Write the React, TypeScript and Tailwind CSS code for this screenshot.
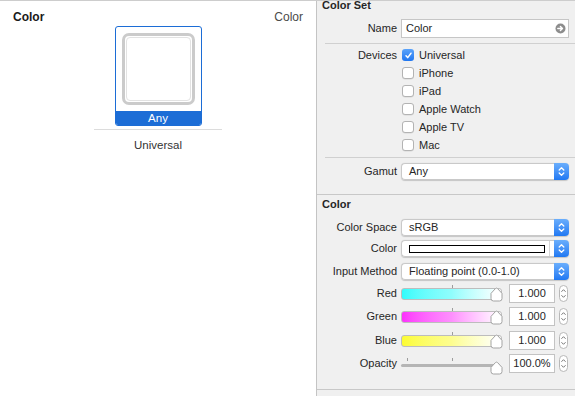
import React from "react";

function BlueStepper() {
  return (
    <div className="w-[15px] h-full shrink-0 rounded-r-[4px] bg-gradient-to-b from-[#6aaefc] to-[#1f78f2] flex items-center justify-center">
      <svg width="7" height="11" viewBox="0 0 7 11" fill="none" stroke="white" strokeWidth="1.3" strokeLinecap="round" strokeLinejoin="round">
        <path d="M1.2 4 L3.5 1.7 L5.8 4" />
        <path d="M1.2 7 L3.5 9.3 L5.8 7" />
      </svg>
    </div>
  );
}

function Popup({ children }: { children?: React.ReactNode }) {
  return (
    <div className="flex-1 h-[17px] flex rounded-[4px] shadow-[0_0.5px_1px_rgba(0,0,0,0.18)]">
      <div className="flex-1 flex items-center bg-white border-y border-l border-[#c9c9c9] rounded-l-[4px] pl-[7px] leading-[13px]">
        {children}
      </div>
      <BlueStepper />
    </div>
  );
}

function Check({ checked, label }: { checked?: boolean; label: string }) {
  return (
    <div className="h-[18px] flex items-center">
      {checked ? (
        <div className="w-[12px] h-[12px] rounded-[3px] bg-gradient-to-b from-[#5aa3fa] to-[#1f76f0] flex items-center justify-center">
          <svg width="9" height="9" viewBox="0 0 9 9" fill="none" stroke="white" strokeWidth="1.5" strokeLinecap="round" strokeLinejoin="round">
            <path d="M2 4.8 L3.7 6.6 L7 2.2" />
          </svg>
        </div>
      ) : (
        <div className="w-[12px] h-[12px] rounded-[3px] bg-white border border-[#b3b3b3] shadow-[0_0.5px_0.5px_rgba(0,0,0,0.1)]" />
      )}
      <span className="ml-[5px] leading-[13px]">{label}</span>
    </div>
  );
}

function Row({ label, children, className = "" }: { label: string; children?: React.ReactNode; className?: string }) {
  return (
    <div className={"flex items-center " + className}>
      <div className="w-[80px] shrink-0 text-right leading-[13px]">{label}</div>
      <div className="ml-[4px] flex-1 flex items-center">{children}</div>
    </div>
  );
}

function Thumb() {
  return (
    <svg className="absolute right-[-1px] top-[-1px]" width="13" height="15" viewBox="0 0 13 15">
      <path d="M1 6.4 L5.4 1.6 Q6.5 0.6 7.6 1.6 L12 6.4 V11.5 Q12 14 9.5 14 H3.5 Q1 14 1 11.5 Z" fill="white" stroke="#a3a3a3" strokeWidth="1" />
    </svg>
  );
}

function SmallStepper() {
  return (
    <div className="w-[9px] h-[17px] rounded-[5px] bg-white border border-[#b8b8b8] flex flex-col items-center justify-center">
      <svg width="7" height="13" viewBox="0 0 7 13" fill="none" stroke="#666" strokeWidth="0.9" strokeLinecap="round" strokeLinejoin="round">
        <path d="M1.7 4.5 L3.5 2.7 L5.3 4.5" />
        <path d="M1.7 8.5 L3.5 10.3 L5.3 8.5" />
      </svg>
    </div>
  );
}

function ValueBox({ value }: { value: string }) {
  return (
    <>
      <div className="ml-[7px] w-[46px] h-[19px] bg-white border border-[#c3c3c3] flex items-center justify-center leading-[13px]">
        {value}
      </div>
      <div className="ml-[4px]">
        <SmallStepper />
      </div>
    </>
  );
}

function GradientSlider({ trackClass }: { trackClass: string }) {
  return (
    <div className="relative w-[101px] h-[12px]">
      <div className="absolute left-[51px] top-[-3px] w-px h-[3px] bg-[#9c9c9c]" />
      <div className={"w-full h-full rounded-[3px] border border-[#bdbdbd] " + trackClass} />
      <Thumb />
    </div>
  );
}

function OpacitySlider() {
  return (
    <div className="relative w-[101px] h-[12px]">
      <div className="absolute left-[6px] top-[0px] w-px h-[3px] bg-[#9c9c9c]" />
      <div className="absolute left-[51px] top-[0px] w-px h-[3px] bg-[#9c9c9c]" />
      <div className="absolute left-0 right-[4px] top-[6px] h-[3px] rounded-full bg-[#b5b5b5]" />
      <svg className="absolute right-[-1px] top-[3px]" width="13" height="14" viewBox="0 0 13 14">
        <path d="M1 6.4 L5.4 1.6 Q6.5 0.6 7.6 1.6 L12 6.4 V10.5 Q12 13 9.5 13 H3.5 Q1 13 1 10.5 Z" fill="white" stroke="#a3a3a3" strokeWidth="1" />
      </svg>
    </div>
  );
}

export default function App() {
  return (
    <div className="w-[575px] h-[396px] flex overflow-hidden border-t border-[#cdcdcd] font-['Liberation_Sans',Arial,sans-serif] text-[11px] text-[#262626]">
      {/* Left panel */}
      <div className="w-[317px] shrink-0 bg-white border-r border-[#c4c4c4] flex flex-col items-center pt-[9px]">
        <div className="w-full h-[14px] flex justify-between px-[13px] leading-[14px] text-[12px]">
          <span className="font-bold text-[#1a1a1a]">Color</span>
          <span className="text-[#4a4a4a]">Color</span>
        </div>
        <div className="mt-[2px] w-[87px] h-[100px] border border-[#1c6dd6] rounded-[3px] flex flex-col items-center overflow-hidden">
          <div className="mt-[6px] w-[73px] h-[72px] rounded-[7px] border-[3px] border-[#cbcbcb] bg-white p-[1px]">
            <div className="w-full h-full rounded-[4px] border border-[#e2e2e2]" />
          </div>
          <div className="mt-auto w-full h-[14px] bg-[#1c6dd6] text-white text-[11.5px] leading-[14px] text-center">Any</div>
        </div>
        <div className="mt-[3px] w-[128px] h-px bg-[#dcdcdc]" />
        <div className="mt-[8px] text-[11.5px] leading-[14px] text-[#333]">Universal</div>
      </div>

      {/* Right panel */}
      <div className="flex-1 bg-[#f0f0f0] flex flex-col">
        <div className="-mt-[2px] h-[13px] leading-[13px] pl-[5px] font-bold">Color Set</div>

        <Row label="Name" className="mt-[7px] h-[19px] pr-[6px]">
          <div className="flex-1 h-[19px] bg-white border border-[#c6c6c6] flex items-center pl-[4px] pr-[2px]">
            <span className="flex-1 leading-[13px]">Color</span>
            <svg width="11" height="11" viewBox="0 0 11 11">
              <circle cx="5.5" cy="5.5" r="5" fill="#8d8d8d" />
              <path d="M2.8 5.5 H7.4 M5.4 3.4 L7.5 5.5 L5.4 7.6" stroke="white" strokeWidth="1.4" fill="none" strokeLinecap="round" strokeLinejoin="round" />
            </svg>
          </div>
        </Row>

        <div className="mt-[5px] ml-[8px] h-px bg-[#d0d0d0]" />

        <div className="mt-[2px] flex">
          <div className="w-[80px] shrink-0 h-[18px] flex items-center justify-end leading-[13px]">Devices</div>
          <div className="ml-[5px] flex flex-col">
            <Check checked label="Universal" />
            <Check label="iPhone" />
            <Check label="iPad" />
            <Check label="Apple Watch" />
            <Check label="Apple TV" />
            <Check label="Mac" />
          </div>
        </div>

        <div className="mt-[3px] ml-[8px] h-px bg-[#d0d0d0]" />

        <Row label="Gamut" className="mt-[5px] pr-[6px]">
          <Popup>Any</Popup>
        </Row>

        <div className="mt-[14px] h-px bg-[#c8c8c8]" />

        <div className="mt-[3px] h-[13px] leading-[13px] pl-[5px] font-bold">Color</div>

        <Row label="Color Space" className="mt-[8px] pr-[6px]">
          <Popup>sRGB</Popup>
        </Row>
        <Row label="Color" className="mt-[4px] pr-[6px]">
          <div className="flex-1 h-[17px] flex rounded-[4px] shadow-[0_0.5px_1px_rgba(0,0,0,0.18)]">
            <div className="flex-1 flex items-center bg-white border-y border-l border-[#c9c9c9] rounded-l-[4px] pl-[7px] pr-[4px]">
              <div className="flex-1 h-[8px] border border-black bg-white" />
              <div className="ml-[4px] w-px h-full bg-[#d6d6d6]" />
            </div>
            <BlueStepper />
          </div>
        </Row>
        <Row label="Input Method" className="mt-[6px] pr-[6px]">
          <Popup>Floating point (0.0-1.0)</Popup>
        </Row>

        <Row label="Red" className="mt-[4px] h-[19px]">
          <GradientSlider trackClass="bg-gradient-to-r from-[#2ffcfc] via-[#8ffdfd] to-white" />
          <ValueBox value="1.000" />
        </Row>
        <Row label="Green" className="mt-[4px] h-[19px]">
          <GradientSlider trackClass="bg-gradient-to-r from-[#fc2ffc] via-[#fd8ffd] to-white" />
          <ValueBox value="1.000" />
        </Row>
        <Row label="Blue" className="mt-[5px] h-[19px]">
          <GradientSlider trackClass="bg-gradient-to-r from-[#fcfc2f] via-[#fdfd8f] to-white" />
          <ValueBox value="1.000" />
        </Row>
        <Row label="Opacity" className="mt-[4px] h-[19px]">
          <OpacitySlider />
          <ValueBox value="100.0%" />
        </Row>

        <div className="mt-[16px] h-px bg-[#c8c8c8]" />
      </div>
    </div>
  );
}
